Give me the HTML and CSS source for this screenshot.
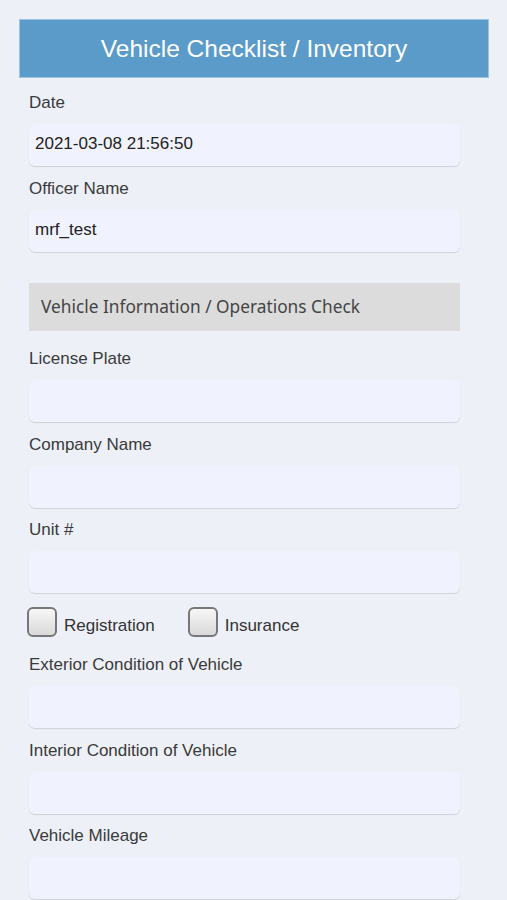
FILE: index.html
```html
<!DOCTYPE html>
<html>
<head>
<meta charset="utf-8">
<link rel="stylesheet" href="styles.css">
</head>
<body>
<div class="page">
  <header class="title-bar">Vehicle Checklist / Inventory</header>
  <form class="form">
    <div class="field">
      <label class="label">Date</label>
      <div class="input">2021-03-08 21:56:50</div>
    </div>
    <div class="field">
      <label class="label">Officer Name</label>
      <div class="input">mrf_test</div>
    </div>
    <div class="section">Vehicle Information / Operations Check</div>
    <div class="field">
      <label class="label">License Plate</label>
      <div class="input"></div>
    </div>
    <div class="field">
      <label class="label">Company Name</label>
      <div class="input"></div>
    </div>
    <div class="field">
      <label class="label">Unit #</label>
      <div class="input"></div>
    </div>
    <div class="checks">
      <label class="check"><span class="box"></span><span class="check-text">Registration</span></label>
      <label class="check"><span class="box"></span><span class="check-text">Insurance</span></label>
    </div>
    <div class="field">
      <label class="label">Exterior Condition of Vehicle</label>
      <div class="input"></div>
    </div>
    <div class="field">
      <label class="label">Interior Condition of Vehicle</label>
      <div class="input"></div>
    </div>
    <div class="field">
      <label class="label">Vehicle Mileage</label>
      <div class="input"></div>
    </div>
  </form>
</div>
</body>
</html>
```

FILE: styles.css
```css
html, body {
  margin: 0;
  padding: 0;
  background: #edf0f7;
  font-family: "Liberation Sans", Arial, sans-serif;
  color: #333;
}

.page {
  padding: 19px 18px 0 19px;
  overflow: hidden;
  height: 900px;
  box-sizing: border-box;
}

.title-bar {
  box-sizing: border-box;
  height: 59px;
  background: #5a9bca;
  border: 1px solid #9cc4e2;
  color: #fff;
  font-size: 24.5px;
  line-height: 57px;
  text-align: center;
}

.form {
  display: flex;
  flex-direction: column;
  width: 431px;
  margin: 14px 0 0 10px;
}

.field {
  display: flex;
  flex-direction: column;
  gap: 12px;
  margin-bottom: 11.5px;
}

.label {
  font-size: 17px;
  line-height: 20px;
  color: #3a3a3a;
  padding-top: 1px;
  margin-bottom: -1px;
}

.input {
  height: 42px;
  box-sizing: border-box;
  background: #f0f3fd;
  border-radius: 6px;
  box-shadow: 0 1px 1px rgba(0, 0, 0, 0.13);
  padding: 0 6px;
  font-size: 17px;
  line-height: 40px;
  color: #222;
}

.section {
  margin-top: 20px;
  margin-bottom: 17px;
  height: 48px;
  background: #dcdcdc;
  padding-left: 12px;
  font-family: "Noto Sans", "Open Sans", sans-serif;
  font-size: 17.3px;
  line-height: 48px;
  color: #444;
}

.checks {
  display: flex;
  gap: 33px;
  margin: 2.5px 0 17px -2px;
}

.check {
  display: flex;
  align-items: center;
  gap: 7px;
  font-size: 17px;
  color: #333;
}

.check-text {
  padding-top: 7px;
}

.box {
  box-sizing: border-box;
  width: 30px;
  height: 30px;
  border: 2px solid #777;
  border-radius: 6px;
  background: linear-gradient(#f7f7f7, #d9d9d9);
}
```
